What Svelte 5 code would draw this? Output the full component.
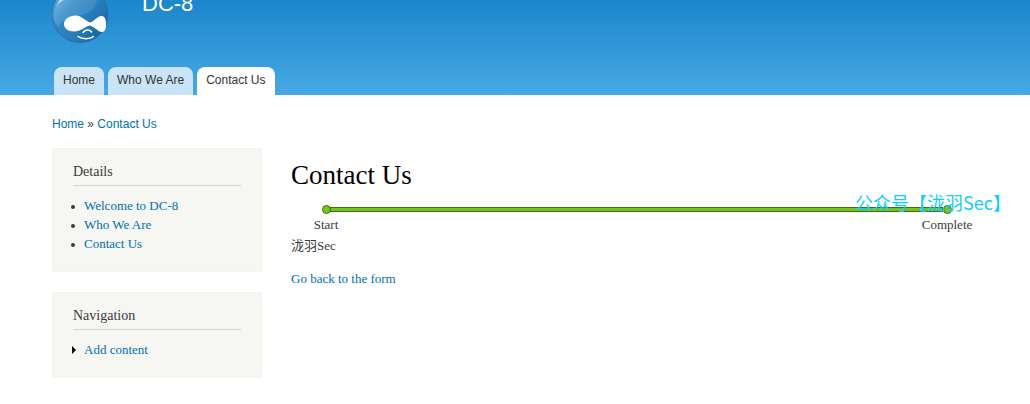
<script lang="ts">
    const tabs = ["Home", "Who We Are", "Contact Us"];
    const details = ["Welcome to DC-8", "Who We Are", "Contact Us"];
    const current = "Contact Us";
</script>

<header>
    <div class="container">
        <div class="branding">
            <a href="#home" aria-label="Home">
                <svg class="logo" viewBox="0 0 58 44" aria-hidden="true">
                    <defs>
                        <linearGradient id="drop" x1="0" y1="0" x2="1" y2="0.7">
                            <stop offset="0" stop-color="#5fb0e0" />
                            <stop offset="0.35" stop-color="#3189c6" />
                            <stop offset="0.75" stop-color="#2379b5" />
                            <stop offset="1" stop-color="#17639b" />
                        </linearGradient>
                        <linearGradient id="shine" x1="0" y1="0" x2="1" y2="0.6">
                            <stop offset="0" stop-color="#fff" stop-opacity="0.16" />
                            <stop offset="1" stop-color="#fff" stop-opacity="0.08" />
                        </linearGradient>
                    </defs>
                    <path
                        d="M10-7C4-2 0 6 0 14c0 16 12 28.500 28 28.500S56 30 56 14C56 6 52-2 46-7z"
                        fill="url(#drop)"
                        stroke="#286b9e"
                        stroke-width="0.7"
                    />
                    <path d="M3 22C0 13 4 4 10-2h35c0 11-7 15-16 17-11 1-19 5-23 12z" fill="url(#shine)" />
                    <path d="M8-1h7C11 0 8 2 4 6z" fill="#fff" opacity="0.6" />
                    <path
                        d="M24 15.500c5 0 9 5 14 7 4-1 7-6 11-6.500 4-.5 5 3.500 5 8s-1 8-4 8c-4 0-7-5-12-6.500-5 1-9 6-16 6-6 0-10-3-10-7.500s5-8.500 12-8.500z"
                        fill="#fff"
                    />
                    <path
                        d="M31 32.500c2-3 6.500-3.500 8.500-.5M26 36.500c4 3 12 3 15.500 0"
                        fill="none"
                        stroke="#fff"
                        stroke-width="1.500"
                        stroke-linecap="round"
                    />
                </svg>
            </a>
            <a class="site-name" href="#home">DC-8</a>
        </div>
        <nav class="tabs" aria-label="Main menu">
            {#each tabs as tab}
                <a href="#{tab}" class:active={tab === current}>{tab}</a>
            {/each}
        </nav>
    </div>
</header>

<div class="container">
    <nav class="breadcrumb" aria-label="Breadcrumb">
        <a href="#home">Home</a> » <a href="#contact">Contact Us</a>
    </nav>

    <div class="columns">
        <aside>
            <section class="block">
                <h2>Details</h2>
                <ul>
                    {#each details as item}
                        <li><a href="#{item}">{item}</a></li>
                    {/each}
                </ul>
            </section>
            <section class="block">
                <h2>Navigation</h2>
                <ul class="collapsed">
                    <li><a href="#add">Add content</a></li>
                </ul>
            </section>
        </aside>

        <main>
            <h1>Contact Us</h1>
            <div class="progress">
                <div class="step">
                    <span class="dot"></span>
                    <span>Start</span>
                </div>
                <div class="bar"></div>
                <div class="step">
                    <span class="dot"></span>
                    <span>Complete</span>
                </div>
                <div class="watermark">公众号【泷羽Sec】</div>
            </div>
            <p>泷羽Sec</p>
            <a href="#form">Go back to the form</a>
        </main>
    </div>
</div>

<style>
    :global(body) {
        background: #fff;
        color: #3b3b3b;
        font-family: Georgia, "Liberation Serif", "Noto Sans CJK SC", serif;
        font-size: 13px;
        line-height: 19px;
    }

    a {
        color: #0071b3;
        text-decoration: none;
    }

    header {
        background: linear-gradient(#1b86cc, #48a9e4);
    }

    .container {
        box-sizing: border-box;
        max-width: 960px;
        margin: 0 auto;
        padding: 0 13px 0 17px;
    }

    .branding {
        display: flex;
        gap: 32px;
        align-items: flex-start;
    }

    .logo {
        display: block;
        width: 58px;
        height: 44px;
    }

    .site-name {
        color: #fff;
        font-family: "Liberation Sans", Arial, sans-serif;
        font-size: 22px;
        line-height: 8px;
    }

    .tabs {
        display: flex;
        gap: 4px;
        padding: 23px 2px 0;
    }

    .tabs a {
        padding: 0 9px 2px;
        border-radius: 8px 8px 0 0;
        background: #c8e4f6;
        color: #333;
        font-family: "Liberation Sans", Arial, sans-serif;
        font-size: 12px;
        line-height: 26px;
    }

    .tabs a.active {
        background: #fff;
    }

    .breadcrumb {
        padding: 20px 0 14px;
        font-family: "Liberation Sans", Arial, sans-serif;
        font-size: 12px;
    }

    .columns {
        display: flex;
        gap: 29px;
    }

    aside {
        flex: 0 0 210px;
    }

    .block {
        box-sizing: border-box;
        margin-bottom: 20px;
        padding: 13px 20px 18px;
        border: 1px solid #f3f4ee;
        background: #f6f6f2;
    }

    h2 {
        margin: 0 0 10px;
        padding-bottom: 3px;
        border-bottom: 1px solid #d6d6d6;
        font-size: 14px;
        font-weight: normal;
        line-height: 20px;
    }

    ul {
        margin: 0;
        padding: 0 0 0 11px;
        list-style: none;
    }

    li::before {
        content: "";
        display: inline-block;
        width: 4px;
        height: 4px;
        margin: 0 9px 1px -13px;
        border-radius: 50%;
        background: #3b3b3b;
    }

    .collapsed li::before {
        width: 0;
        height: 0;
        margin: 0 8px 0 -12px;
        border: 4px solid transparent;
        border-right: 0;
        border-left-color: #000;
        border-radius: 0;
        background: none;
    }

    main {
        flex: 1;
        min-width: 0;
    }

    h1 {
        margin: 11px 0 14px;
        color: #000;
        font-size: 27px;
        font-weight: normal;
        line-height: 32px;
    }

    .progress {
        position: relative;
        display: flex;
    }

    .step {
        display: flex;
        flex: 0 0 70px;
        flex-direction: column;
        gap: 1px;
        align-items: center;
    }

    .dot {
        z-index: 1;
        box-sizing: border-box;
        width: 9px;
        height: 9px;
        border: 1px solid #3b7308;
        border-radius: 50%;
        background: #74c421;
    }

    .bar {
        flex: 1;
        box-sizing: border-box;
        height: 5px;
        margin: 2px -31px 0;
        border: 1px solid #3b7308;
        background: #74c421;
    }

    .watermark {
        position: absolute;
        z-index: 2;
        top: -15px;
        right: -29px;
        color: #10cfff;
        font-family: "Noto Sans CJK SC", sans-serif;
        font-size: 18px;
        line-height: 25px;
        white-space: nowrap;
    }

    p {
        margin: 2px 0 14px;
    }
</style>
